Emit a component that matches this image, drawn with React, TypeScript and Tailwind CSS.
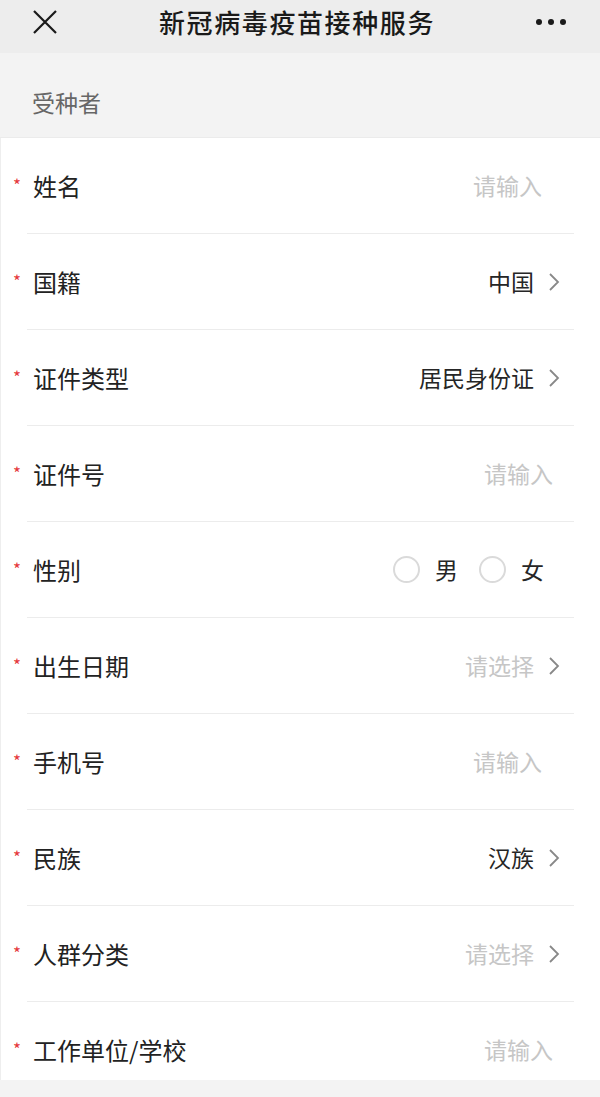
import React from 'react';

type Row = {
  label: string;
  value?: string;
  placeholder?: string;
  arrow?: boolean;
  radio?: boolean;
  padRight?: string;
};

const rows: Row[] = [
  { label: '姓名', placeholder: '请输入', padRight: 'pr-[32px]' },
  { label: '国籍', value: '中国', arrow: true },
  { label: '证件类型', value: '居民身份证', arrow: true },
  { label: '证件号', placeholder: '请输入', padRight: 'pr-[21px]' },
  { label: '性别', radio: true },
  { label: '出生日期', placeholder: '请选择', arrow: true },
  { label: '手机号', placeholder: '请输入', padRight: 'pr-[32px]' },
  { label: '民族', value: '汉族', arrow: true },
  { label: '人群分类', placeholder: '请选择', arrow: true },
  { label: '工作单位/学校', placeholder: '请输入', padRight: 'pr-[21px]' },
];

const Chevron = () => (
  <svg width="14" height="20" viewBox="0 0 14 20" className="ml-[13px]">
    <path d="M3 2 L11 10 L3 18" fill="none" stroke="#888" strokeWidth="1.8" />
  </svg>
);

const Radio = ({ label }: { label: string }) => (
  <div className="flex items-center">
    <span className="w-[27px] h-[27px] rounded-full border-2 border-[#dadada]" />
    <span className="ml-[15px] text-[23px] text-[#262626]">{label}</span>
  </div>
);

export default function App() {
  return (
    <div
      className="w-[600px] h-[1097px] bg-[#f3f3f3] overflow-hidden"
      style={{ fontFamily: '"Noto Sans CJK SC", "Noto Sans", sans-serif' }}
    >
      {/* top bar */}
      <div className="h-[53px] bg-[#ededed] flex items-center justify-between px-[32px] pb-[10px]">
        <svg width="26" height="26" viewBox="0 0 26 26">
          <path d="M2 2 L24 24 M24 2 L2 24" stroke="#1a1a1a" strokeWidth="2.2" />
        </svg>
        <div className="text-[26px] font-medium text-[#1a1a1a] tracking-[1.6px]">新冠病毒疫苗接种服务</div>
        <div className="flex gap-[6px] pr-[2px]">
          <span className="w-[6px] h-[6px] rounded-full bg-[#1a1a1a]" />
          <span className="w-[6px] h-[6px] rounded-full bg-[#1a1a1a]" />
          <span className="w-[6px] h-[6px] rounded-full bg-[#1a1a1a]" />
        </div>
      </div>

      {/* section title */}
      <div className="h-[85px] flex items-end pb-[18px] px-[32px] text-[23px] text-[#666] border-b border-[#ebebeb]">
        受种者
      </div>

      {/* form card */}
      <div className="bg-white border-l border-[#eee]">
        {rows.map((r, i) => {
          const last = i === rows.length - 1;
          return (
            <div key={r.label} className="pl-[26px] pr-[26px]">
              <div
                className={`flex justify-between ${
                  last ? 'h-[78px] items-start pt-[30px]' : 'h-[96px] items-center border-b border-[#ececec]'
                }`}
              >
                <div className="flex items-center relative">
                  <span className="absolute left-[-14px] top-[8px] text-[17px] leading-none text-[#e5383b]">*</span>
                  <span className="pl-[6px] text-[24px] text-[#222]">{r.label}</span>
                </div>
                <div className={`flex items-center ${r.arrow ? 'pr-[13px]' : r.radio ? 'pr-[30px]' : r.padRight ?? ''}`}>
                  {r.radio ? (
                    <div className="flex items-center gap-[21px]">
                      <Radio label="男" />
                      <Radio label="女" />
                    </div>
                  ) : (
                    <>
                      <span className={`text-[23px] ${r.value ? 'text-[#262626]' : 'text-[#c6c6c6]'}`}>
                        {r.value ?? r.placeholder}
                      </span>
                      {r.arrow && <Chevron />}
                    </>
                  )}
                </div>
              </div>
            </div>
          );
        })}
      </div>
    </div>
  );
}
